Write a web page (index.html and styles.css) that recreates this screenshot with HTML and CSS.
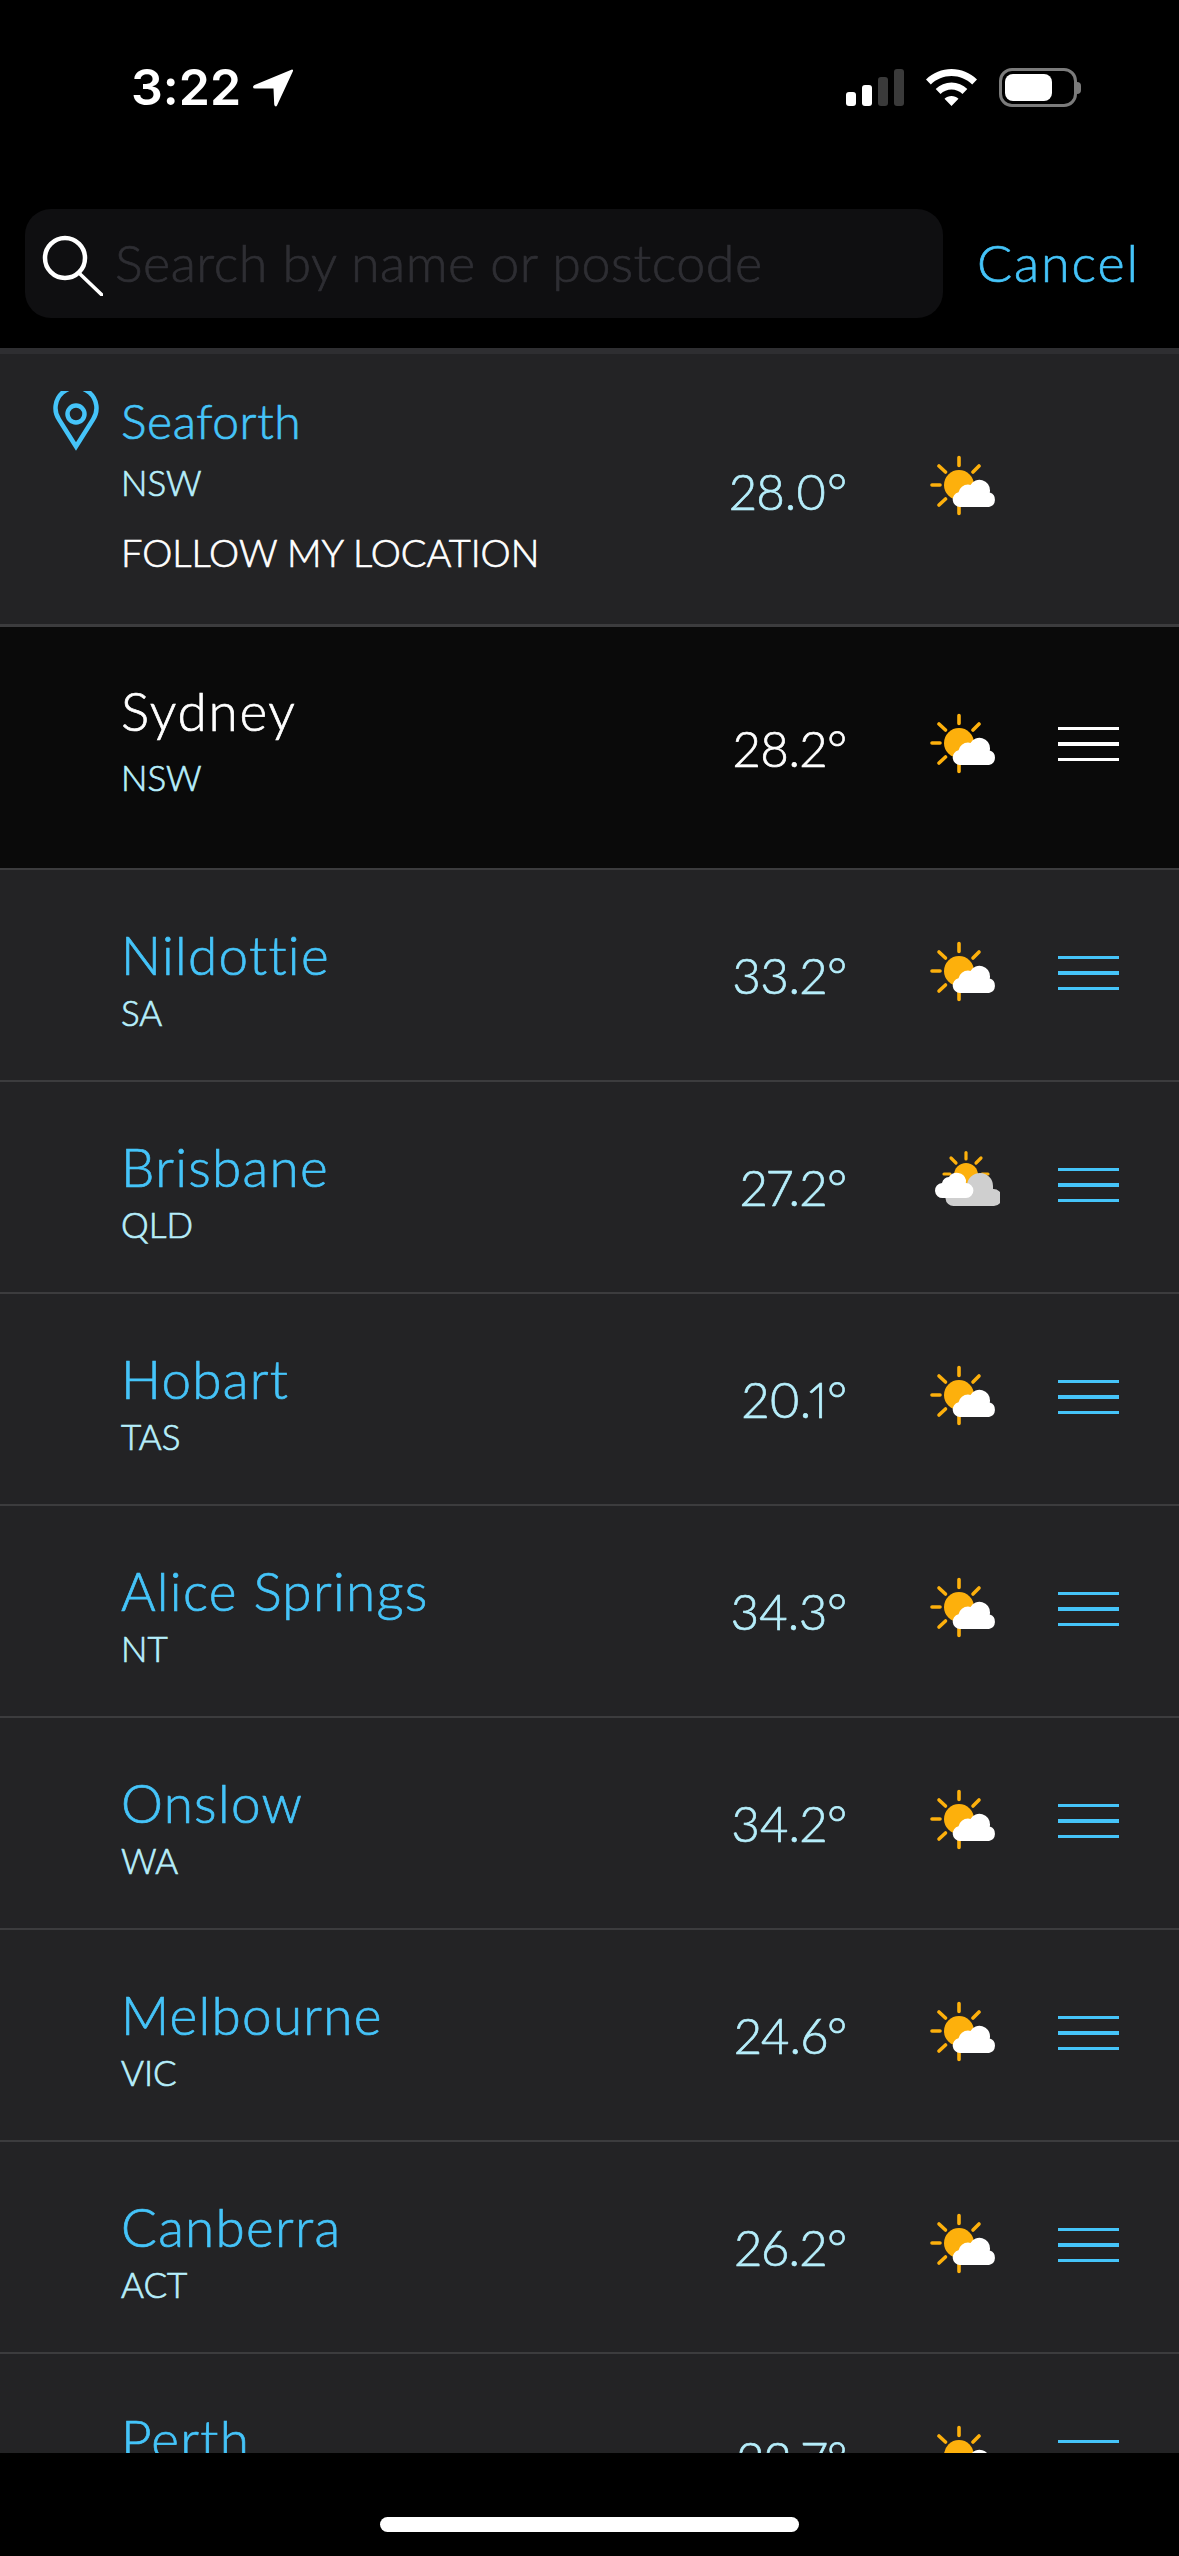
FILE: index.html
```html
<!DOCTYPE html>
<html lang="en">
<head>
<meta charset="utf-8">
<title>Search locations</title>
<link rel="stylesheet" href="styles.css">
</head>
<body>
<svg class="defs" width="0" height="0" aria-hidden="true">
  <symbol id="sun-cloud" viewBox="0 -4 70 68">
    <g stroke="#fdb00c" stroke-width="3.6" stroke-linecap="round" fill="none">
      <path d="M29 1.500V9.500M29 49.500V57.500M2 29H10M9 10L15.500 16M49 10L43 16M9 49L15.500 43"/>
    </g>
    <circle cx="29" cy="29" r="15" fill="#fdb00c"/>
    <path fill="#fff" d="M30 51a7.500 7.500 0 0 1-1.500-14.800a10 10 0 0 1 9.500-7.700q1.500 0 2.500.4a10.500 10.500 0 0 1 19.500 5.600q0 1.500-.3 2a7.500 7.500 0 0 1-.7 14.500z"/>
  </symbol>
  <symbol id="clouds" viewBox="0 -4 70 68">
    <path stroke="#fdb00c" stroke-width="3.2" stroke-linecap="round" fill="none" d="M36 -1.500V5M21 4L26 9M51 4L46 9M14 20H20M52 20H58"/>
    <circle cx="36" cy="21" r="12" fill="#fdb00c"/>
    <path fill="#cfcfcf" d="M24 52a8 8 0 0 1-1-16h14v-4a13 13 0 0 1 26 0v3a8.500 8.500 0 0 1 1 17z"/>
    <path fill="#fff" d="M13 44a7.500 7.500 0 0 1-1-15a8 8 0 0 1 7-6a9.500 9.500 0 0 1 17 3q0 2-.2 3a7.500 7.500 0 0 1 .2 15z"/>
  </symbol>
</svg>

<main class="screen">
  <header class="status">
    <div class="status-left">
      <span class="time">3:22</span>
      <svg class="arrow" viewBox="0 0 40 38"><path fill="#fff" d="M39 .5a1 1 0 0 1 1 1.500L24 36.500q-1 1.500-2 .5q-.8-.5-.8-2L20.500 19.500H2q-2 0-2-1.500q0-1 1.500-2z"/></svg>
    </div>
    <div class="status-right">
      <div class="signal">
        <i class="bar b1"></i><i class="bar b2"></i><i class="bar b3"></i><i class="bar b4"></i>
      </div>
      <svg class="wifi" viewBox="0 0 51 37"><path fill="#fff" d="M25.500 0C35 0 44 3.700 51 10.500l-4.800 5C40.500 10 33.300 7 25.500 7S10.500 10 4.800 15.500L0 10.500C7 3.700 16 0 25.500 0zM25.500 13.500c6 0 11.500 2.300 15.800 6.400l-4.800 5c-3-2.800-6.900-4.400-11-4.400s-8 1.600-11 4.400l-4.800-5c4.300-4.100 9.800-6.400 15.800-6.400zM25.500 27c2.700 0 5 1 7 2.700L25.500 37l-7-7.300c2-1.700 4.300-2.700 7-2.700z"/></svg>
      <div class="battery"><div class="battery-fill"></div></div>
      <div class="battery-nub"></div>
    </div>
  </header>

  <section class="searchbar">
    <div class="searchbox">
      <svg class="search-icon" viewBox="0 0 62 62"><circle cx="24" cy="24" r="20" fill="none" stroke="#fff" stroke-width="4.500"/><path d="M38 39L61 61" stroke="#fff" stroke-width="3.600" stroke-linecap="round"/></svg>
      <span class="placeholder">Search by name or postcode</span>
    </div>
    <span class="cancel">Cancel</span>
  </section>

  <section class="list">
    <article class="row row-current">
      <svg class="pin" viewBox="0 0 46 60"><path fill="none" stroke="#45c4f9" stroke-width="4.500" d="M23 55.500L6 28.500A20.500 20.500 0 1 1 40 28.500z" stroke-linejoin="miter"/><circle cx="23" cy="23" r="8.500" fill="none" stroke="#45c4f9" stroke-width="4.500"/></svg>
      <div class="names">
        <div class="name">Seaforth</div>
        <div class="state">NSW</div>
        <div class="follow">FOLLOW MY LOCATION</div>
      </div>
      <div class="temp">28.0°</div>
      <svg class="wx"><use href="#sun-cloud"/></svg>
      <div class="menu-slot"></div>
    </article>

    <article class="row row-active">
      <div class="names">
        <div class="name">Sydney</div>
        <div class="state">NSW</div>
      </div>
      <div class="temp">28.2°</div>
      <svg class="wx"><use href="#sun-cloud"/></svg>
      <div class="menu"><i></i><i></i><i></i></div>
    </article>

    <article class="row">
      <div class="names"><div class="name">Nildottie</div><div class="state">SA</div></div>
      <div class="temp">33.2°</div>
      <svg class="wx"><use href="#sun-cloud"/></svg>
      <div class="menu"><i></i><i></i><i></i></div>
    </article>
    <article class="row">
      <div class="names"><div class="name">Brisbane</div><div class="state">QLD</div></div>
      <div class="temp">27.2°</div>
      <svg class="wx"><use href="#clouds"/></svg>
      <div class="menu"><i></i><i></i><i></i></div>
    </article>
    <article class="row">
      <div class="names"><div class="name">Hobart</div><div class="state">TAS</div></div>
      <div class="temp">20.1°</div>
      <svg class="wx"><use href="#sun-cloud"/></svg>
      <div class="menu"><i></i><i></i><i></i></div>
    </article>
    <article class="row">
      <div class="names"><div class="name">Alice Springs</div><div class="state">NT</div></div>
      <div class="temp">34.3°</div>
      <svg class="wx"><use href="#sun-cloud"/></svg>
      <div class="menu"><i></i><i></i><i></i></div>
    </article>
    <article class="row">
      <div class="names"><div class="name">Onslow</div><div class="state">WA</div></div>
      <div class="temp">34.2°</div>
      <svg class="wx"><use href="#sun-cloud"/></svg>
      <div class="menu"><i></i><i></i><i></i></div>
    </article>
    <article class="row">
      <div class="names"><div class="name">Melbourne</div><div class="state">VIC</div></div>
      <div class="temp">24.6°</div>
      <svg class="wx"><use href="#sun-cloud"/></svg>
      <div class="menu"><i></i><i></i><i></i></div>
    </article>
    <article class="row">
      <div class="names"><div class="name">Canberra</div><div class="state">ACT</div></div>
      <div class="temp">26.2°</div>
      <svg class="wx"><use href="#sun-cloud"/></svg>
      <div class="menu"><i></i><i></i><i></i></div>
    </article>
    <article class="row">
      <div class="names"><div class="name">Perth</div><div class="state">WA</div></div>
      <div class="temp">22.7°</div>
      <svg class="wx"><use href="#sun-cloud"/></svg>
      <div class="menu"><i></i><i></i><i></i></div>
    </article>
  </section>

  <footer class="home"><div class="home-indicator"></div></footer>
</main>
</body>
</html>
```

FILE: styles.css
```css
* { box-sizing: border-box; }
html, body { margin: 0; padding: 0; background: #000; }
.defs { position: absolute; }
.screen {
  width: 1179px;
  height: 2556px;
  display: flex;
  flex-direction: column;
  overflow: hidden;
  background: #000;
  font-family: "Lato", "Liberation Sans", sans-serif;
  font-weight: 300;
  font-variant-numeric: proportional-nums;
  font-variant-ligatures: none;
  -webkit-text-stroke: 0.7px currentColor;
}

/* status bar */
.status {
  height: 209px;
  flex: none;
  display: flex;
  justify-content: space-between;
  align-items: flex-start;
  padding: 68px 98px 0 131px;
}
.status-left { display: flex; align-items: flex-start; gap: 12px; }
.time {
  font-family: "Inter", "Liberation Sans", sans-serif;
  font-weight: 600;
  font-size: 50px;
  line-height: 39px;
  color: #fff;
  -webkit-text-stroke: 0;
}
.arrow { width: 40px; height: 38px; margin-top: 1px; }
.status-right { display: flex; align-items: flex-start; }
.signal { display: flex; align-items: flex-end; gap: 6px; height: 38px; margin-right: 22px; }
.bar { width: 10px; border-radius: 3px; background: #fff; display: block; }
.b1 { height: 14px; }
.b2 { height: 21px; }
.b3 { height: 29px; background: #3a3a3a; }
.b4 { height: 37px; background: #3a3a3a; }
.wifi { width: 51px; height: 37px; margin: 1px 22px 0 0; }
.battery {
  width: 78px;
  height: 39px;
  border: 3px solid #7b7b7b;
  border-radius: 13px;
  padding: 3px;
}
.battery-fill { width: 47px; height: 27px; background: #fff; border-radius: 8px; }
.battery-nub {
  width: 4px;
  height: 12px;
  margin-top: 14px;
  background: #7b7b7b;
  border-radius: 0 6px 6px 0;
}

/* search */
.searchbar {
  height: 145px;
  flex: none;
  display: flex;
  align-items: flex-start;
  padding-left: 25px;
  border-bottom: 6px solid #2e2e31;
}
.searchbox {
  width: 918px;
  height: 109px;
  background: #0f0f11;
  border-radius: 26px;
  display: flex;
  align-items: center;
  padding-left: 16px;
}
.search-icon { width: 62px; height: 62px; flex: none; margin-top: 3px; }
.placeholder { font-size: 52px; letter-spacing: .5px; color: #2e2e33; margin: -4px 0 0 12px; white-space: nowrap; }
.cancel { font-size: 52px; letter-spacing: 1.9px; color: #45c4f9; margin: 23px 0 0 34px; line-height: 60px; }

/* list */
.list { flex: 1; min-height: 0; overflow: hidden; background: #232325; }
.row {
  position: relative;
  height: 212px;
  display: flex;
  align-items: center;
  padding: 0 60px 0 121px;
  border-bottom: 2px solid #3c3c3e;
}
.row-current { height: 273px; border-bottom-width: 3px; }
.row-active { height: 243px; background: #0a0a0a; padding-bottom: 7px; }
.pin { position: absolute; left: 53px; top: 37px; width: 46px; height: 60px; }
.names { flex: 1; min-width: 0; margin-top: 8px; }
.name { font-size: 53px; letter-spacing: 1.3px; line-height: 60px; color: #45c4f9; white-space: nowrap; }
.state { font-size: 35px; line-height: 42px; color: #b6eefb; margin-top: 6px; }
.follow { font-size: 38px; line-height: 48px; color: #fff; margin-top: 25px; }
.temp { font-size: 49px; letter-spacing: -.2px; color: #b6eefb; white-space: nowrap; }
.wx { width: 70px; height: 68px; margin: 0 0 6px 83px; flex: none; }
.menu-slot { width: 61px; margin-left: 58px; flex: none; }
.menu { width: 61px; margin: 0 0 4px 58px; flex: none; display: flex; flex-direction: column; gap: 12px; }
.menu i { display: block; height: 3.500px; background: #45c4f9; }

.row-current .names { margin: 0 0 11px; }
.row-current .name { font-size: 48px; letter-spacing: .6px; }
.row-current .state { margin-top: 10px; }
.row-current .temp { margin-top: 3px; }

.row-active .names { margin: 0 0 10px; }
.row-active .name { letter-spacing: 1.8px; }
.row-active .name, .row-active .temp { color: #fff; }
.row-active .state { margin-top: 15px; }
.row-active .temp { margin-top: 7px; }
.row-active .wx, .row-active .menu { margin-bottom: 0; }
.row-active .menu i { background: #fff; }

/* home */
.home {
  height: 103px;
  flex: none;
  display: flex;
  justify-content: center;
  padding-top: 64px;
  background: #000;
}
.home-indicator { width: 419px; height: 15px; border-radius: 8px; background: #fff; }
```
